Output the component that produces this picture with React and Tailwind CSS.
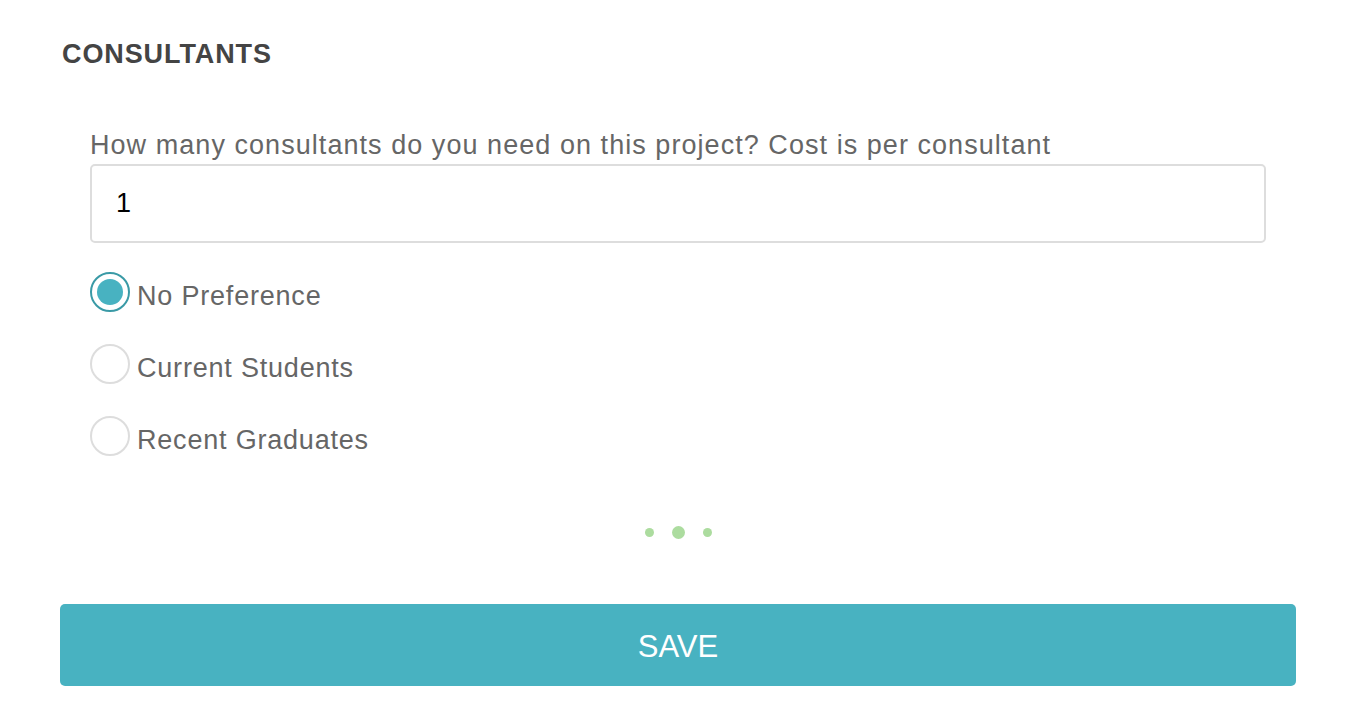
export default function App() {
  const options = [
    { label: "No Preference", checked: true },
    { label: "Current Students", checked: false },
    { label: "Recent Graduates", checked: false },
  ];
  return (
    <div className="w-[1354px] h-[702px] bg-white pl-[60px] pr-[58px] pt-[38px]" style={{ fontFamily: '"Liberation Sans", Arial, sans-serif' }}>
      <h2 className="text-[27px] font-bold text-[#444444] leading-[32px] ml-[2px] tracking-[0.9px]">CONSULTANTS</h2>
      <div className="px-[30px] mt-[60px]">
        <label className="block text-[27px] leading-[30px] text-[#666666] tracking-[1.05px]">How many consultants do you need on this project? Cost is per consultant</label>
        <div className="mt-[4px] h-[79px] border-2 border-[#dddddd] rounded-[5px] flex items-center px-[24px] text-[27px] text-black">1</div>
        <div className="mt-[29px] flex flex-col gap-[32px]">
          {options.map((o) => (
            <div key={o.label} className="flex items-center h-[40px]">
              <div className={`w-[40px] h-[40px] rounded-full border-2 flex items-center justify-center ${o.checked ? "border-[#3a9aa6]" : "border-[#dddddd]"}`}>
                {o.checked && <div className="w-[26px] h-[26px] rounded-full bg-[#48b2c1]" />}
              </div>
              <span className="ml-[7px] text-[27px] text-[#666666] leading-[30px] mt-[8px] tracking-[0.8px]">{o.label}</span>
            </div>
          ))}
        </div>
      </div>
      <div className="flex justify-center items-center gap-[18px] mt-[70px] h-[12px]">
        <div className="w-[9px] h-[9px] rounded-full bg-[#acdc9f]" />
        <div className="w-[13px] h-[13px] rounded-full bg-[#acdc9f]" />
        <div className="w-[9px] h-[9px] rounded-full bg-[#acdc9f]" />
      </div>
      <button className="mt-[66px] w-full h-[82px] rounded-[5px] bg-[#48b2c1] text-white text-[31px] flex items-center justify-center pt-[5px]">SAVE</button>
    </div>
  );
}
